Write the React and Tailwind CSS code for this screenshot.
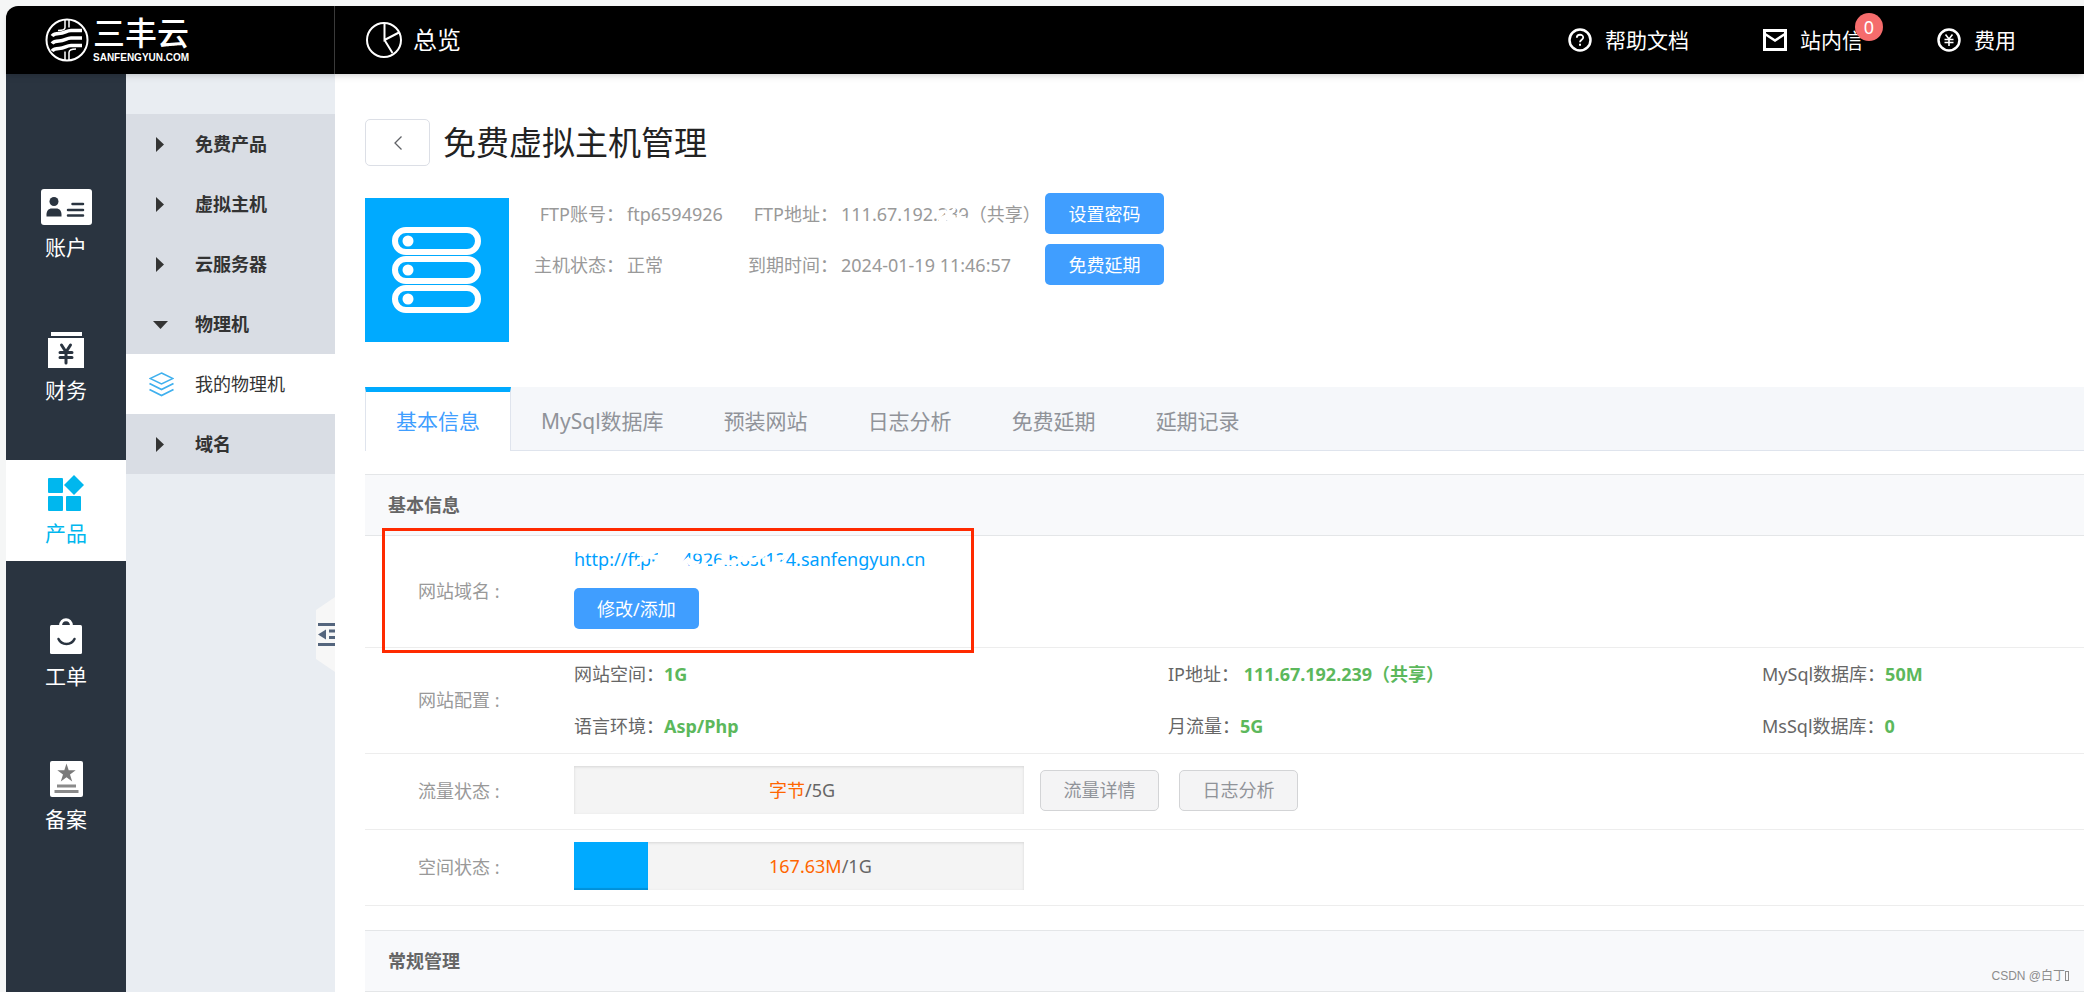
import { useState } from "react";

const railItems = [
  { label: "账户", icon: AccountIcon },
  { label: "财务", icon: FinanceIcon },
  { label: "产品", icon: ProductIcon },
  { label: "工单", icon: TicketIcon },
  { label: "备案", icon: RecordIcon },
];

const menuItems = [
  { label: "免费产品" },
  { label: "虚拟主机" },
  { label: "云服务器" },
  { label: "物理机", children: ["我的物理机"] },
  { label: "域名" },
];

const tabs = ["基本信息", "MySql数据库", "预装网站", "日志分析", "免费延期", "延期记录"];

const config = [
  { label: "网站空间：", value: "1G" },
  { label: "IP地址：", value: " 111.67.192.239（共享）" },
  { label: "MySql数据库：", value: "50M" },
  { label: "语言环境：", value: "Asp/Php" },
  { label: "月流量：", value: "5G" },
  { label: "MsSql数据库：", value: "0" },
];

function Logo() {
  return (
    <a href="#" className="flex items-center gap-1 text-white">
      <svg width="44" height="44" viewBox="0 0 44 44" fill="none" stroke="currentColor" aria-hidden="true">
        <circle cx="22" cy="22" r="20.5" strokeWidth="2" />
        <path d="M20 1.500v8c0 2-2 3-7 3M24 1.500v8" strokeWidth="1.500" />
        <path d="M7 18c2-2.500 4-2.500 7-2.500 6 0 7-3 12-3h11" strokeWidth="3.500" />
        <path d="M7 25.500c2-2.500 4-2.500 7-2.500 6 0 7-3 12-3h11" strokeWidth="3.500" />
        <path d="M7 33c2-2.500 4-2.500 7-2.500 6 0 7-3 12-3h11" strokeWidth="3.500" />
        <path d="M20 42.500v-9M24 42.500v-8c0-2 2-3.500 7-3.500" strokeWidth="1.500" />
      </svg>
      <span className="flex flex-col font-['Liberation_Sans','Noto_Sans_CJK_SC',sans-serif]">
        <span className="text-[32px] leading-9 font-medium">三丰云</span>
        <span className="text-[10px] leading-3 font-bold">SANFENGYUN.COM</span>
      </span>
    </a>
  );
}

function PieIcon() {
  return (
    <svg width="36" height="36" viewBox="0 0 36 36" fill="none" stroke="#fff" strokeWidth="2" aria-hidden="true">
      <circle cx="18" cy="18" r="17" />
      <path d="M18.500 1v17L33 10.500M18.500 18l8 13" />
    </svg>
  );
}

function HelpIcon() {
  return (
    <svg width="24" height="24" viewBox="0 0 24 24" fill="none" stroke="#fff" aria-hidden="true">
      <circle cx="12" cy="12" r="10.500" strokeWidth="2.500" />
      <path d="M8.800 9.800c0-4 6.400-4 6.400-.4 0 2.200-3.200 2.400-3.200 4.800" strokeWidth="1.800" />
      <path d="M12 15.800v2" strokeWidth="2" />
    </svg>
  );
}

function MailIcon() {
  return (
    <svg width="24" height="24" viewBox="0 0 24 24" fill="none" stroke="#fff" strokeWidth="3" aria-hidden="true">
      <path d="M1.500 2.500h21v19h-21z" />
      <path d="M2 6l10 6.500L22 6" strokeWidth="2.500" />
    </svg>
  );
}

function CoinIcon() {
  return (
    <svg width="24" height="24" viewBox="0 0 24 24" fill="none" stroke="#fff" aria-hidden="true">
      <circle cx="12" cy="12" r="10.500" strokeWidth="2.500" />
      <path d="M8.500 6.500L12 11l3.500-4.500M12 11v7M7.500 11.500h9M7.500 14.500h9" strokeWidth="1.600" />
    </svg>
  );
}

function AccountIcon() {
  return (
    <svg width="51" height="36" viewBox="0 0 51 36" aria-hidden="true">
      <rect width="51" height="36" rx="3" fill="#fff" />
      <g fill="#2a3440">
        <circle cx="13" cy="12.500" r="4.500" />
        <path d="M5.500 27.500v-2c0-4 2.500-6 5-6h5c2.500 0 5 2 5 6v2z" />
      </g>
      <path d="M31.500 15H42M27 21h15M27 26.500h15" stroke="#2a3440" strokeWidth="2.500" strokeLinecap="round" />
    </svg>
  );
}

function FinanceIcon() {
  return (
    <svg width="36" height="36" viewBox="0 0 36 36" aria-hidden="true">
      <path d="M3 0h31v4H3zM0 6h36v30H0z" fill="#fff" />
      <path
        d="M13.500 13l4.500 7 4.500-7M18 20v11M12 20.500h12M12 25.500h12"
        fill="none"
        stroke="#2a3440"
        strokeWidth="3"
        strokeLinecap="round"
      />
    </svg>
  );
}

function ProductIcon() {
  return (
    <svg width="36" height="36" viewBox="0 0 36 36" fill="currentColor" aria-hidden="true">
      <rect y="3" width="15" height="15" rx="1" />
      <rect y="21" width="15" height="15" rx="1" />
      <rect x="18" y="21" width="15" height="15" rx="1" />
      <path d="M26 0l10 10-10 10-10-10z" />
    </svg>
  );
}

function TicketIcon() {
  return (
    <svg width="32" height="36" viewBox="0 0 32 36" fill="none" aria-hidden="true">
      <rect y="7" width="32" height="29" rx="1.500" fill="#fff" />
      <path d="M10.500 8C10.500-.5 21.500-.5 21.500 8" stroke="#fff" strokeWidth="3" />
      <path d="M8.500 21c3 6.500 13 6.500 16 0" stroke="#2a3440" strokeWidth="2.500" strokeLinecap="round" />
    </svg>
  );
}

function RecordIcon() {
  return (
    <svg width="33" height="36" viewBox="0 0 33 36" aria-hidden="true">
      <rect width="33" height="36" rx="2" fill="#fff" />
      <path
        d="M16.500 2.500l2.200 6.800h7l-5.700 4.200 2.200 7-5.700-4.300-5.700 4.300 2.200-7-5.700-4.200h7z"
        fill="#7a7a7a"
      />
      <path d="M7 25h19M4.500 30.500h24" stroke="#8a8a8a" strokeWidth="3" />
    </svg>
  );
}

function LayersIcon() {
  return (
    <svg width="25" height="25" viewBox="0 0 25 25" fill="none" stroke="#3fb0ee" strokeWidth="1.500" aria-hidden="true">
      <path d="M12.500 1L24 6.500 12.500 12 1 6.500z" />
      <path d="M.5 11.500l12 6 12-6M.5 17.500l12 6 12-6" strokeWidth="1.800" />
    </svg>
  );
}

function ServerIcon() {
  return (
    <svg width="144" height="144" viewBox="0 0 144 144" fill="none" className="mt-[5px] shrink-0 bg-[#00aaff]" aria-hidden="true">
      {[29, 58, 87].map((y) => (
        <g key={y}>
          <rect x="30" y={y + 3} width="83" height="22" rx="11" stroke="#fff" strokeWidth="6" />
          <circle cx="43" cy={y + 14} r="5.500" fill="#fff" />
        </g>
      ))}
    </svg>
  );
}

function Header() {
  return (
    <header className="relative z-10 flex h-[68px] rounded-tl-xl bg-black text-white shadow-md">
      <div className="flex w-[329px] items-center border-r border-[#3a3a3a] pl-[39px]">
        <Logo />
      </div>
      <div className="flex flex-1 items-center justify-between pr-[68px] pl-[31px]">
        <a href="#" className="flex items-center gap-[11px] text-2xl leading-9">
          <PieIcon />
          总览
        </a>
        <nav className="flex items-center gap-[74px] text-[21px] leading-7">
          <a href="#" className="flex items-center gap-[13px]">
            <HelpIcon />
            帮助文档
          </a>
          <a href="#" className="relative flex items-center gap-[13px]">
            <MailIcon />
            站内信
            <span className="absolute -top-[13px] -right-5 flex h-7 min-w-7 items-center justify-center rounded-full bg-[#f56c6c] text-lg leading-7">
              0
            </span>
          </a>
          <a href="#" className="flex items-center gap-[13px]">
            <CoinIcon />
            费用
          </a>
        </nav>
      </div>
    </header>
  );
}

function Rail() {
  const [active, setActive] = useState("产品");

  return (
    <nav className="flex w-[120px] shrink-0 flex-col gap-[42px] bg-[#2a3440] pt-[100px] text-white">
      {railItems.map(({ label, icon: Icon }) => (
        <button
          key={label}
          onClick={() => setActive(label)}
          className={`flex h-[101px] cursor-pointer flex-col items-center gap-2 pt-[15px] text-[21px] leading-7 ${
            active === label ? "bg-white text-[#00b7ee]" : ""
          }`}
        >
          <Icon />
          {label}
        </button>
      ))}
    </nav>
  );
}

function SideMenu() {
  const [open, setOpen] = useState("物理机");

  return (
    <aside className="relative w-[209px] shrink-0 bg-[#e9edf2] pt-10 text-lg text-[#333]">
      {menuItems.map(({ label, children }) => (
        <div key={label}>
          <button
            onClick={() => setOpen(open === label ? "" : label)}
            className="flex h-[60px] w-full cursor-pointer items-center bg-[#d9dde4] pl-[27px] font-bold"
          >
            <svg width="15" height="15" viewBox="0 0 15 15" fill="#333" className="mr-[27px]" aria-hidden="true">
              <path d={open === label ? "M0 4h15L7.500 12z" : "M3 0v15l8-7.500z"} />
            </svg>
            {label}
          </button>
          {open === label &&
            children?.map((child) => (
              <a key={child} href="#" className="flex h-[60px] items-center gap-[21px] bg-white pl-[23px]">
                <LayersIcon />
                {child}
              </a>
            ))}
        </div>
      ))}
      <button aria-label="收起菜单" className="absolute top-[523px] right-0 cursor-pointer">
        <svg width="19" height="75" viewBox="0 0 19 75" aria-hidden="true">
          <path d="M19 0L0 13v49l19 13z" fill="#f7f7f7" />
          <path d="M2 27.500h17M13 34h6M13 40.500h6M2 47.500h17" stroke="#54657d" strokeWidth="3" />
          <path d="M2 37.500l8-5v10z" fill="#54657d" />
        </svg>
      </button>
    </aside>
  );
}

function PrimaryButton({ children }) {
  return (
    <button className="block h-[41px] min-w-[119px] cursor-pointer rounded-[5px] bg-[#409eff] px-[23px] text-lg leading-6 whitespace-nowrap text-white">
      {children}
    </button>
  );
}

function PlainButton({ children }) {
  return (
    <button className="h-[41px] min-w-[119px] cursor-pointer rounded-[5px] border border-[#d3d4d6] bg-[#f4f4f5] px-[22px] text-lg leading-6 whitespace-nowrap text-[#909399]">
      {children}
    </button>
  );
}

function HostSummary() {
  return (
    <section className="mt-[27px] flex gap-[25px]">
      <ServerIcon />
      <dl className="grid auto-rows-[41px] grid-cols-[90px_118px_90px_201px_auto] content-start items-center gap-x-[3px] gap-y-[10px] text-lg leading-[26px] whitespace-nowrap text-[#999]">
        <dt className="text-right">FTP账号：</dt>
        <dd>ftp6594926</dd>
        <dt className="text-right">FTP地址：</dt>
        <dd className="relative">
          111.67.192.239（共享）
          {/* masks part of the address */}
          <svg className="absolute top-0 left-[94px]" width="42" height="28" viewBox="0 0 42 28" fill="none" stroke="#fff" aria-hidden="true">
            <path d="M4 20l8-4 7 4 8-2 6 3" strokeWidth="6" />
            <path d="M3 12l7-2 4 5 6-8M22 16l5-4" strokeWidth="3" />
          </svg>
        </dd>
        <PrimaryButton>设置密码</PrimaryButton>
        <dt className="text-right">主机状态：</dt>
        <dd>正常</dd>
        <dt className="text-right">到期时间：</dt>
        <dd>2024-01-19 11:46:57</dd>
        <PrimaryButton>免费延期</PrimaryButton>
      </dl>
    </section>
  );
}

function Tabs() {
  const [active, setActive] = useState("基本信息");

  return (
    <div role="tablist" className="mt-[45px] flex h-16 border-b border-[#dfe4ed] bg-[#f5f7fa] text-[21px]">
      {tabs.map((tab) => (
        <button
          key={tab}
          role="tab"
          aria-selected={active === tab}
          onClick={() => setActive(tab)}
          className={`h-16 cursor-pointer whitespace-nowrap ${
            active === tab
              ? "border-x border-t-[5px] border-x-[#dfe4ed] border-t-[#00aaff] bg-white px-[30px] text-[#409eff]"
              : "px-[30px] pt-[5px] text-[#909399]"
          }`}
        >
          {tab}
        </button>
      ))}
    </div>
  );
}

function SectionTitle({ children }) {
  return (
    <h2 className="flex h-[62px] items-center border-y border-[#e4e6e8] bg-[#f8f9fb] pl-[23px] text-lg font-bold text-[#666]">
      {children}
    </h2>
  );
}

function Row({ label, children }) {
  return (
    <div className="flex border-b border-[#ededed] text-lg leading-[27px]">
      <div className="flex w-[209px] shrink-0 items-center pl-[53px] text-[#999]">{label} :</div>
      <div className="min-w-0 flex-1 text-[#666]">{children}</div>
    </div>
  );
}

function UsageBar({ used, total, percent }) {
  return (
    <div className="relative h-12 w-[450px] bg-[#f4f4f4] shadow-[inset_0_1px_3px_rgba(0,0,0,0.12)]">
      <div
        className="h-full bg-[#00aaff] shadow-[inset_0_-2px_1px_rgba(0,0,0,0.15)]"
        style={{ width: `${percent}%` }}
      />
      <div className="absolute inset-0 flex items-center pl-[195px]">
        <span className="text-[#ff6600]">{used}</span>/{total}
      </div>
    </div>
  );
}

export default function App() {
  return (
    <div className="flex min-h-screen flex-col overflow-hidden bg-[#f5f6f6] pt-[6px] pl-[6px] font-['Noto_Sans','Noto_Sans_CJK_SC',sans-serif]">
      <Header />
      <div className="flex flex-1 bg-white">
        <Rail />
        <SideMenu />
        <main className="min-w-0 flex-1 pt-[45px] pl-[30px]">
          <div className="flex items-center gap-[13px]">
            <button
              aria-label="返回"
              className="flex h-[47px] w-[65px] cursor-pointer items-center justify-center rounded-[5px] border border-[#dcdfe6] text-[#606266]"
            >
              <svg width="8" height="14" viewBox="0 0 8 14" fill="none" stroke="currentColor" strokeWidth="1.300" aria-hidden="true">
                <path d="M7.500.5L1 7l6.500 6.500" />
              </svg>
            </button>
            <h1 className="text-[33px] leading-10 text-[#222]">免费虚拟主机管理</h1>
          </div>

          <HostSummary />
          <Tabs />

          <section className="relative mt-[23px]">
            <SectionTitle>基本信息</SectionTitle>
            <Row label="网站域名">
              <div className="pt-[10px] pb-[18px]">
                <a href="#" className="relative block w-fit text-[#00a0ff]">
                  http://ftp6594926.host124.sanfengyun.cn
                  <svg className="absolute top-0 left-0" width="236" height="27" viewBox="0 0 236 27" fill="none" stroke="#fff" aria-hidden="true">
                    <path d="M84 2h24v23H84z" fill="#fff" stroke="none" />
                    <path d="M60 19l6-5 9-4 10 2" strokeWidth="5" />
                    <path d="M76 18h10M106 20l8-6 6 7 14-2" strokeWidth="5" />
                    <path d="M106 4l20 2 14-1 18 2" strokeWidth="4" />
                    <path d="M140 22l8-6 12 1 12-6 8 4 10-7" strokeWidth="5" />
                    <path d="M158 6h24M194 20l8-3 8 3 5 2" strokeWidth="6" />
                    <path d="M207 13l5-5 4-3" strokeWidth="4" />
                  </svg>
                </a>
                <div className="mt-[15px]">
                  <PrimaryButton>修改/添加</PrimaryButton>
                </div>
              </div>
            </Row>
            <Row label="网站配置">
              <div className="grid grid-cols-[594fr_594fr_322fr] gap-y-[25px] py-[13px] whitespace-nowrap">
                {config.map(({ label, value }) => (
                  <div key={label}>
                    {label}
                    <b className="whitespace-pre text-[#5cb85c]">{value}</b>
                  </div>
                ))}
              </div>
            </Row>
            <Row label="流量状态">
              <div className="flex pt-3 pb-[15px]">
                <UsageBar used="字节" total="5G" percent={0} />
                <div className="ml-4 flex items-center gap-5">
                  <PlainButton>流量详情</PlainButton>
                  <PlainButton>日志分析</PlainButton>
                </div>
              </div>
            </Row>
            <Row label="空间状态">
              <div className="pt-3 pb-[15px]">
                <UsageBar used="167.63M" total="1G" percent={16.37} />
              </div>
            </Row>
            {/* highlight frame round the domain row */}
            <div className="pointer-events-none absolute top-[54px] left-[17px] h-[125px] w-[592px] border-3 border-[#ff2a00]" />
          </section>

          <section className="relative mt-6">
            <SectionTitle>常规管理</SectionTitle>
            <div className="absolute right-[15px] bottom-2 flex items-center font-['Liberation_Sans','Noto_Sans_CJK_SC',sans-serif] text-xs leading-4 text-[#8c8c8c]">
              CSDN @白丁
              <span className="h-[10px] w-1 border border-[#8c8c8c]" />
            </div>
          </section>
        </main>
      </div>
    </div>
  );
}
